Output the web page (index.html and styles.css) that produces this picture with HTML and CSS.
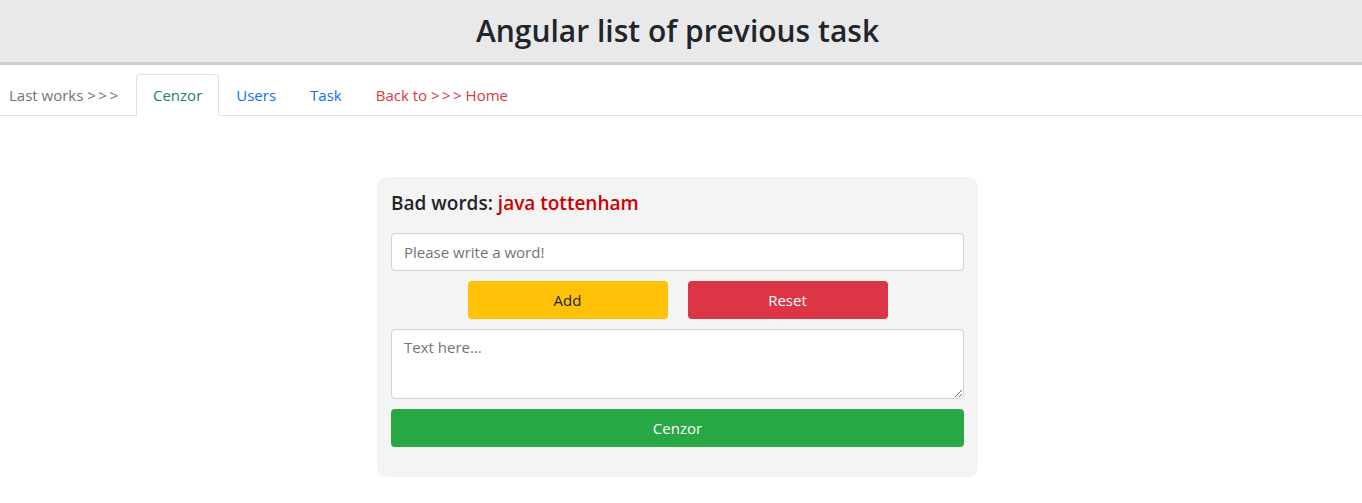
FILE: index.html
```html
<!DOCTYPE html>
<html lang="en">
<head>
<meta charset="utf-8">
<title>Angular list of previous task</title>
<link rel="stylesheet" href="styles.css">
</head>
<body>
<header class="top">
  <h1 class="top-title">Angular list of previous task</h1>
</header>
<nav class="tabs">
  <span class="tab tab-muted">Last works <span class="arrows">&gt;&gt;&gt;</span></span>
  <a class="tab tab-active" href="#">Cenzor</a>
  <a class="tab tab-link" href="#">Users</a>
  <a class="tab tab-link" href="#">Task</a>
  <a class="tab tab-danger" href="#">Back to <span class="arrows">&gt;&gt;&gt;</span> Home</a>
</nav>
<main class="main">
  <section class="card">
    <h2 class="card-title">Bad words: <span class="bad">java tottenham</span></h2>
    <input class="field" type="text" placeholder="Please write a word!">
    <div class="btn-row">
      <button class="btn btn-warning">Add</button>
      <button class="btn btn-danger">Reset</button>
    </div>
    <textarea class="field area" placeholder="Text here..."></textarea>
    <button class="btn btn-success btn-block">Cenzor</button>
  </section>
</main>
</body>
</html>
```

FILE: styles.css
```css
* { box-sizing: border-box; }
body {
  margin: 0;
  font-family: "Open Sans", "Noto Sans", sans-serif;
  font-size: 16px;
  line-height: 1.5;
  color: #212529;
  background: #fff;
}
.top {
  background: #e9e9e9;
  border-bottom: 3px solid #cdcdcd;
  height: 65px;
  padding-right: 7px;
}
.top-title {
  margin: 0;
  text-align: center;
  font-size: 30px;
  font-weight: 600;
  line-height: 62px;
  color: #212529;
}
.tabs {
  display: flex;
  margin-top: 9px;
  border-bottom: 1px solid #dee2e6;
}
.tab {
  display: block;
  flex: none;
  white-space: nowrap;
  padding: 8px 16px;
  border: 1px solid transparent;
  border-top-left-radius: 4px;
  border-top-right-radius: 4px;
  margin-bottom: -1px;
  text-decoration: none;
  font-size: 15px;
  line-height: 24px;
}
.arrows { letter-spacing: 2.5px; margin-right: -2.5px; }
.tab-muted { color: #6c757d; padding-left: 8px; padding-right: 17px; }
.tab-active {
  color: #198754;
  border-color: #dee2e6 #dee2e6 #fff;
  background: #fff;
}
.tab-link { color: #0d6efd; }
.tab-danger { color: #dc3545; }
.main {
  padding: 61px 7px 0 0;
}
.card {
  width: 601px;
  margin: 0 auto;
  background: #f4f4f4;
  border-radius: 10px;
  padding: 15px 14px 30px;
}
.card-title {
  margin: 0 0 18px;
  font-size: 19px;
  font-weight: 600;
  line-height: 23px;
  color: #212529;
}
.bad { color: #cc0000; }
.field {
  display: block;
  width: 100%;
  height: 38px;
  padding: 6px 12px;
  font-family: inherit;
  font-size: 15px;
  line-height: 1.5;
  color: #212529;
  background: #fff;
  border: 1px solid #ced4da;
  border-radius: 4px;
}
.field::placeholder { color: #6c757d; }
.area {
  height: 70px;
  margin-top: 10px;
  resize: vertical;
}
.btn-row {
  display: flex;
  justify-content: center;
  gap: 20px;
  margin-top: 10px;
}
.btn {
  width: 200px;
  height: 38px;
  border: 1px solid transparent;
  border-radius: 4px;
  font-family: inherit;
  font-size: 15px;
  line-height: 1.5;
  padding: 6px 12px;
}
.btn-warning { background: #ffc107; color: #212529; }
.btn-danger { background: #dc3545; color: #fff; }
.btn-success { background: #28a745; color: #fff; }
.btn-block { display: block; width: 100%; margin-top: 10px; }
```
